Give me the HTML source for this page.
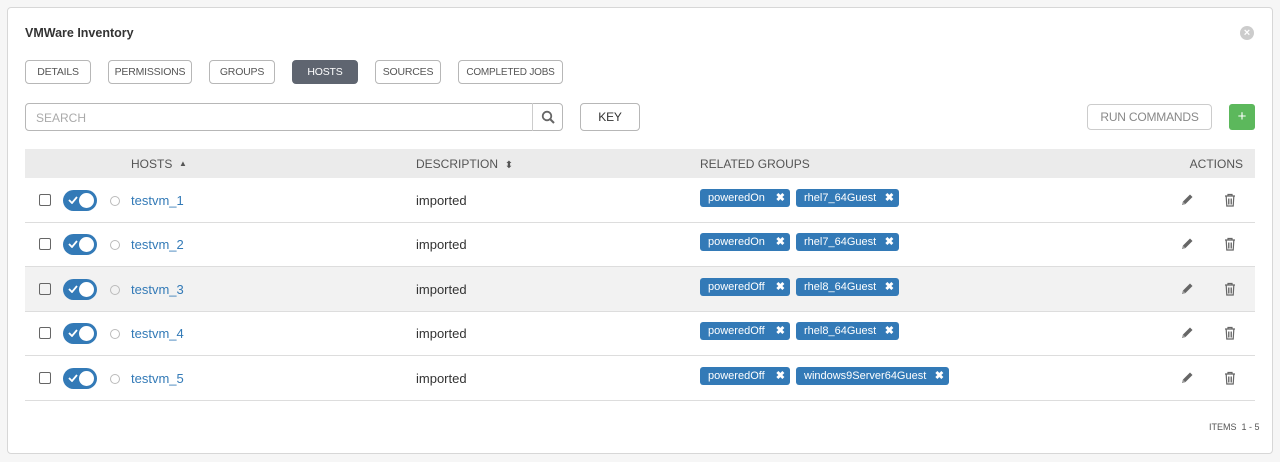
<!DOCTYPE html><html><head><style>
body{margin:0;background:#f6f6f6;font-family:"Liberation Sans",sans-serif;width:1280px;height:462px;overflow:hidden;position:relative}
.p{position:absolute;left:7px;top:7px;width:1264px;height:445px;background:#fff;border:1px solid #d7d7d7;border-radius:4px}
.a{position:absolute}
.t{left:25px;top:26px;font-size:12.5px;font-weight:bold;color:#333}
.b{position:absolute;top:60px;height:24px;border:1px solid #b7b7b7;border-radius:4px;font-size:10.5px;color:#555;display:flex;align-items:center;justify-content:center;box-sizing:border-box;background:#fff;letter-spacing:-0.2px}
.row{position:absolute;left:25px;width:1230px;height:44px;border-bottom:1px solid #ddd;font-size:13px;color:#333}
.row>*{position:absolute}
.cb{left:14px;top:16px;width:10px;height:10px;border:1px solid #666;border-radius:2px}
.tg{left:38px;top:12px;width:34px;height:21px;background:#337ab7;border-radius:11px}
.tg:after{content:"";position:absolute;right:3px;top:3px;width:15px;height:15px;border-radius:50%;background:#fff}
.tg svg{position:absolute;left:5px;top:6px}
.rd{left:85px;top:18px;width:8px;height:8px;border:1px solid #bbb;border-radius:50%}
.nm{left:106px;top:15px;color:#337ab7}
.ds{left:391px;top:15px}
.tag{top:11px;height:18px;background:#337ab7;color:#fff;border-radius:3px;font-size:11px;line-height:18px;padding-left:8px;box-sizing:border-box}
.tag b{position:absolute;right:5px;top:0;font-size:11px}
.ed{left:1155px;top:15px}
.tr{left:1199px;top:15px}
</style></head><body>
<div class="p"></div>
<div class="a t">VMWare Inventory</div>
<div class="a" style="left:1240px;top:26px;width:14px;height:14px;border-radius:50%;background:#ccc;color:#fff;font-size:11px;text-align:center;line-height:14px;font-weight:bold">×</div>
<div class="b" style="left:25px;width:66px">DETAILS</div>
<div class="b" style="left:108px;width:84px">PERMISSIONS</div>
<div class="b" style="left:209px;width:66px">GROUPS</div>
<div class="b" style="left:292px;width:66px;background:#5f6570;border-color:#5f6570;color:#fff">HOSTS</div>
<div class="b" style="left:375px;width:66px">SOURCES</div>
<div class="b" style="left:458px;width:105px;font-size:10px">COMPLETED JOBS</div>
<div class="a" style="left:25px;top:103px;width:538px;height:28px;border:1px solid #b7b7b7;border-radius:4px;box-sizing:border-box;font-size:12px;color:#aaa;padding:7px 10px">SEARCH</div>
<div class="a" style="left:532px;top:103px;width:31px;height:28px;border-left:1px solid #ccc;box-sizing:border-box;text-align:center;line-height:28px;color:#666"><svg width="14" height="14" viewBox="0 0 14 14" style="margin-top:7px"><circle cx="6" cy="6" r="4.3" fill="none" stroke="#666" stroke-width="1.8"/><path d="M9 9l4 4" stroke="#666" stroke-width="2"/></svg></div>
<div class="b" style="left:580px;top:103px;height:28px;width:60px;font-size:12px;color:#333">KEY</div>
<div class="b" style="left:1087px;top:104px;height:26px;width:125px;font-size:12px;color:#888;border-color:#ccc">RUN COMMANDS</div>
<div class="a" style="left:1229px;top:104px;width:26px;height:26px;background:#5cb85c;border-radius:3px;color:#fff;text-align:center;line-height:25px;font-size:15px">+</div>
<div class="a" style="left:25px;top:149px;width:1230px;height:29px;background:#ebebeb;font-size:12px;color:#555">
<span class="a" style="left:106px;top:8px">HOSTS &nbsp;<span style="font-size:8px;position:relative;top:-2px">▲</span></span>
<span class="a" style="left:391px;top:8px">DESCRIPTION &nbsp;<span style="font-size:10px">⬍</span></span>
<span class="a" style="left:675px;top:8px">RELATED GROUPS</span>
<span class="a" style="right:12px;top:8px">ACTIONS</span></div>

<svg width="0" height="0" style="position:absolute"><defs>
<symbol id="ck" viewBox="0 0 10 8"><path d="M1 4l3 3 5-6" fill="none" stroke="#fff" stroke-width="1.8"/></symbol>
<symbol id="pe" viewBox="0 0 14 14"><path d="M2 12l1-3.5 7-7 2.5 2.5-7 7z" fill="#666"/><path d="M2 12l1-3.5 2.5 2.5z" fill="#999"/></symbol>
<symbol id="tr" viewBox="0 0 12 14"><path d="M1 3h10M4 3V1.5h4V3" fill="none" stroke="#666" stroke-width="1.2"/><path d="M2.2 3.5l.6 9.5h6.4l.6-9.5" fill="none" stroke="#666" stroke-width="1.2"/><path d="M4.5 5.5v6M6 5.5v6M7.5 5.5v6" stroke="#666" stroke-width=".9"/></symbol>
</defs></svg>

<div class="row" style="top:178px"><i class="cb"></i><i class="tg"><svg width="10" height="8"><use href="#ck"/></svg></i><i class="rd"></i><span class="nm">testvm_1</span><span class="ds">imported</span><span class="tag" style="left:675px;width:90px">poweredOn<b>✖</b></span><span class="tag" style="left:771px;width:103px">rhel7_64Guest<b>✖</b></span><svg class="ed" width="14" height="14"><use href="#pe"/></svg><svg class="tr" width="12" height="14"><use href="#tr"/></svg></div>
<div class="row" style="top:222px"><i class="cb"></i><i class="tg"><svg width="10" height="8"><use href="#ck"/></svg></i><i class="rd"></i><span class="nm">testvm_2</span><span class="ds">imported</span><span class="tag" style="left:675px;width:90px">poweredOn<b>✖</b></span><span class="tag" style="left:771px;width:103px">rhel7_64Guest<b>✖</b></span><svg class="ed" width="14" height="14"><use href="#pe"/></svg><svg class="tr" width="12" height="14"><use href="#tr"/></svg></div>
<div class="row" style="top:267px;background:#f2f2f2"><i class="cb"></i><i class="tg"><svg width="10" height="8"><use href="#ck"/></svg></i><i class="rd"></i><span class="nm">testvm_3</span><span class="ds">imported</span><span class="tag" style="left:675px;width:90px">poweredOff<b>✖</b></span><span class="tag" style="left:771px;width:103px">rhel8_64Guest<b>✖</b></span><svg class="ed" width="14" height="14"><use href="#pe"/></svg><svg class="tr" width="12" height="14"><use href="#tr"/></svg></div>
<div class="row" style="top:311px"><i class="cb"></i><i class="tg"><svg width="10" height="8"><use href="#ck"/></svg></i><i class="rd"></i><span class="nm">testvm_4</span><span class="ds">imported</span><span class="tag" style="left:675px;width:90px">poweredOff<b>✖</b></span><span class="tag" style="left:771px;width:103px">rhel8_64Guest<b>✖</b></span><svg class="ed" width="14" height="14"><use href="#pe"/></svg><svg class="tr" width="12" height="14"><use href="#tr"/></svg></div>
<div class="row" style="top:356px"><i class="cb"></i><i class="tg"><svg width="10" height="8"><use href="#ck"/></svg></i><i class="rd"></i><span class="nm">testvm_5</span><span class="ds">imported</span><span class="tag" style="left:675px;width:90px">poweredOff<b>✖</b></span><span class="tag" style="left:771px;width:153px">windows9Server64Guest<b>✖</b></span><svg class="ed" width="14" height="14"><use href="#pe"/></svg><svg class="tr" width="12" height="14"><use href="#tr"/></svg></div>
<div class="a" style="left:1209px;top:422px;font-size:9px;color:#555">ITEMS &nbsp;1 - 5</div>
</body></html>
